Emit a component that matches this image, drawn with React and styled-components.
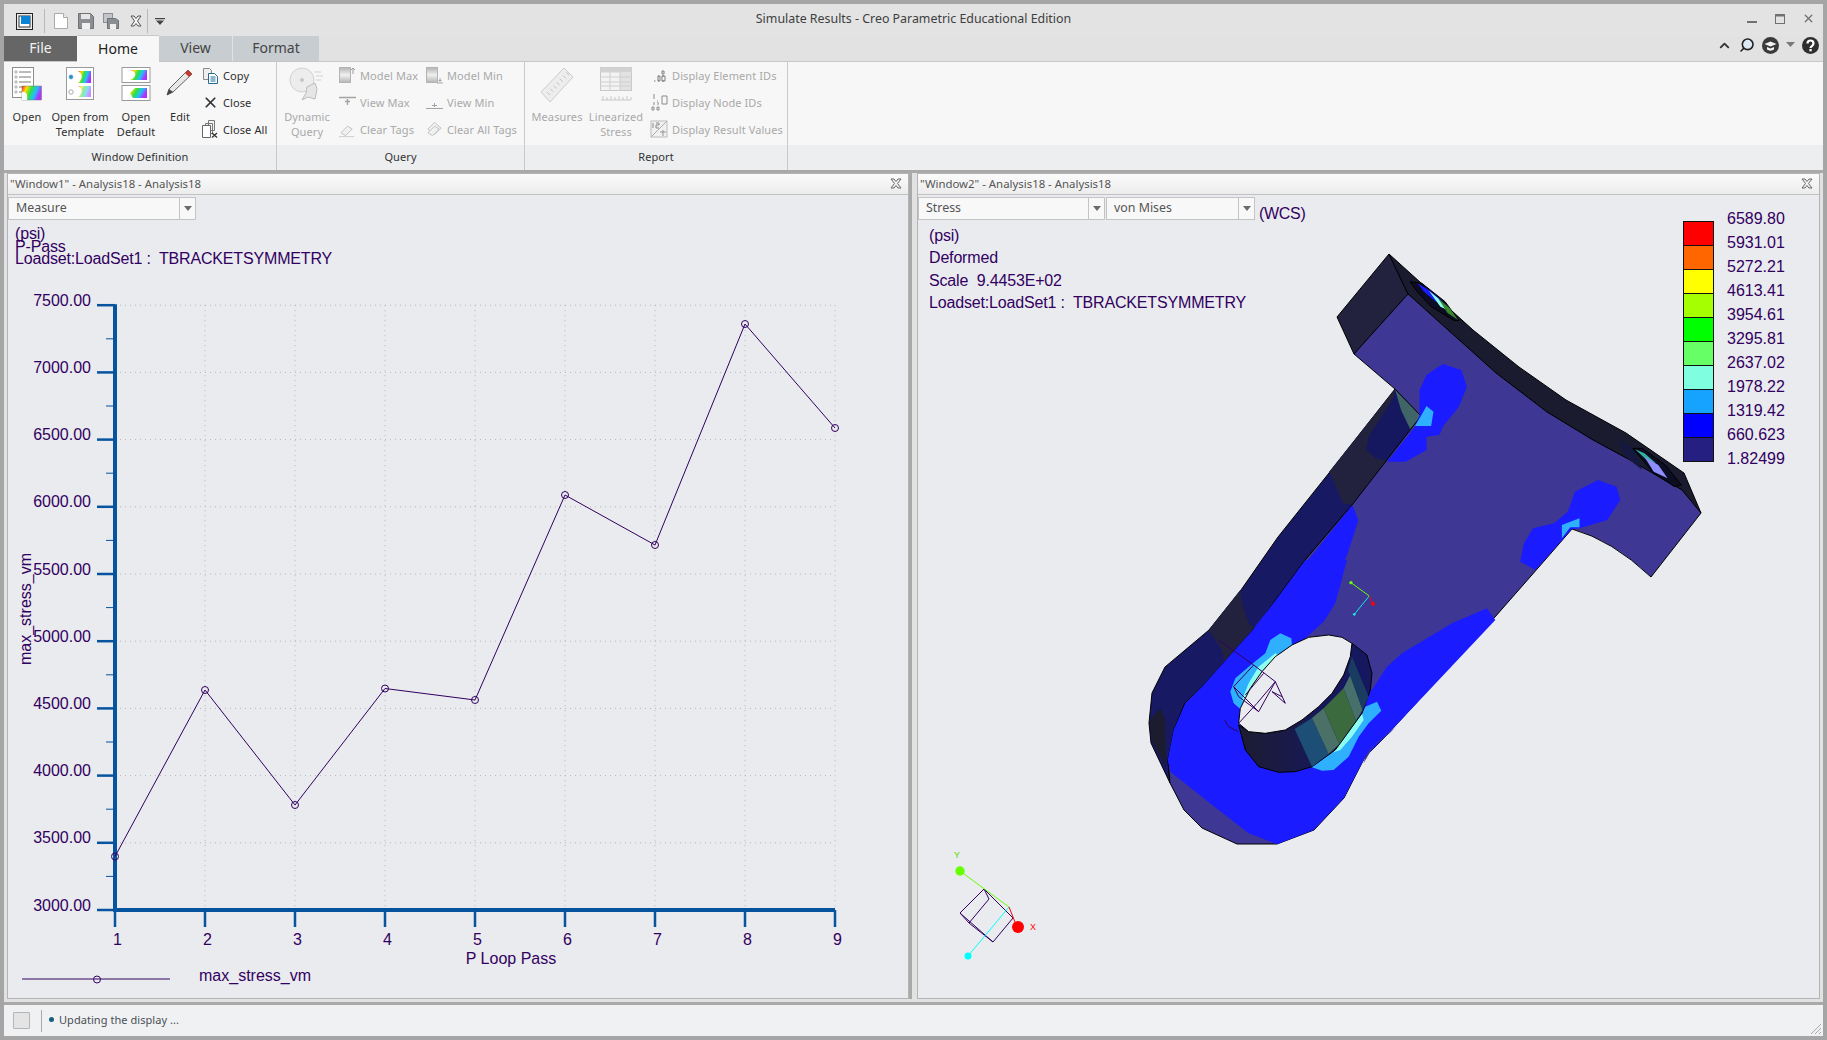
import styled, { createGlobalStyle } from "styled-components";
import { ChevronUp, Search, X } from "lucide-react";

const GlobalStyle = createGlobalStyle`
  html, body { margin: 0; padding: 0; background: #a5a5a5; }
  body { font-family: "Noto Sans", "Open Sans", sans-serif; overflow: hidden; }
`;

const PURPLE = "#32005f";
const AXIS = "#06539f";

/* ---------- ribbon icons ---------- */

const Fringe = ({ id }) => (
  <defs>
    <linearGradient id={id} x1="0" y1="0" x2="1" y2="0.3">
      <stop offset="0" stopColor="#ff2020" />
      <stop offset="0.25" stopColor="#ffe000" />
      <stop offset="0.5" stopColor="#30e040" />
      <stop offset="0.75" stopColor="#20c0ff" />
      <stop offset="1" stopColor="#b030ff" />
    </linearGradient>
  </defs>
);

const OpenIcon = () => (
  <svg width="30" height="34" viewBox="0 0 30 34">
    <Fringe id="f1" />
    <rect x="0.5" y="0.5" width="21" height="30" fill="#fff" stroke="#8d8d8d" />
    {[5, 10, 15, 20, 25].map((y) => (
      <g key={y}>
        <circle cx="4" cy={y} r="1.2" fill="#fff" stroke="#777" strokeWidth="0.6" />
        <line x1="7" y1={y} x2="19" y2={y} stroke="#777" />
      </g>
    ))}
    <rect x="10" y="19" width="19.5" height="14" fill="url(#f1)" stroke="#777" strokeWidth="0.5" />
    <path d="M10 25c4-1 6 3 5 8h-5z" fill="#fff" />
  </svg>
);

const TemplateIcon = () => (
  <svg width="30" height="34" viewBox="0 0 30 34">
    <Fringe id="f2" />
    <rect x="1.5" y="0.5" width="27" height="32" fill="#fff" stroke="#9a9a9a" />
    <rect x="13" y="4" width="13" height="12" fill="url(#f2)" />
    <path d="M13 4c5 3 5 8 0 12z" fill="#fff" />
    <rect x="13" y="19" width="13" height="11" fill="url(#f2)" opacity="0.55" />
    <path d="M13 19c5 3 5 7 0 11z" fill="#fff" />
    <circle cx="6" cy="10" r="2.4" fill="#2b8fc4" stroke="#fff" strokeWidth="0.5" />
    <circle cx="6" cy="25" r="2.2" fill="#fff" stroke="#aaa" />
  </svg>
);

const DefaultIcon = () => (
  <svg width="30" height="34" viewBox="0 0 30 34">
    <Fringe id="f3" />
    <rect x="1" y="0.5" width="28" height="15" fill="#fff" stroke="#9a9a9a" />
    <rect x="9" y="3" width="17" height="10" fill="url(#f3)" />
    <path d="M9 3c6 1 8 7 0 10z" fill="#fff" />
    <rect x="1" y="18.5" width="28" height="15" fill="#fff" stroke="#9a9a9a" />
    <rect x="6" y="21" width="20" height="10" fill="url(#f3)" />
    <path d="M6 21h8l-5 5 3 5H6z" fill="#fff" />
  </svg>
);

const PencilIcon = () => (
  <svg width="30" height="30" viewBox="0 0 30 30">
    <path d="M23 3l4 4L8 25l-6 3 2-6z" fill="#e8e8e8" stroke="#555" strokeWidth="0.9" />
    <path d="M23 3l4 4-3 3-4-4z" fill="#c5392c" />
    <path d="M2 28l2-6 4 3z" fill="#444" />
  </svg>
);

const CopyIcon = () => (
  <svg width="17" height="17" viewBox="0 0 17 17">
    <path d="M1.5 1.5h6l2 2v9h-8z" fill="#eee" stroke="#8a8a8a" />
    <path d="M6.5 6.5h6l3 3v7h-9z" fill="#fff" stroke="#226a95" />
    <path d="M8.5 10h5M8.5 12h5M8.5 14h5" stroke="#226a95" />
  </svg>
);

const CloseAllIcon = () => (
  <svg width="17" height="18" viewBox="0 0 17 18">
    <path d="M6.5.5h6v10h-6zM3.5 3.5h7v10h-7z" fill="#f3f3f3" stroke="#777" />
    <path d="M.5 5.5h8v12h-8z" fill="#fff" stroke="#666" />
    <path d="M10 13l5 4.5M15 13l-5 4.5" stroke="#333" strokeWidth="1.3" />
  </svg>
);

const DiscIcon = () => (
  <svg width="36" height="36" viewBox="0 0 36 36" opacity="0.62">
    <circle cx="13" cy="13" r="12" fill="#e8e8e8" stroke="#bbb" />
    <circle cx="13" cy="13" r="2" fill="#aaa" />
    <path d="M25 5h7M27 9h7M27 13h5" stroke="#bbb" />
    <path d="M18 20l8-4 2 6-2 10-7-2-6 3 4-7z" fill="#ddd" stroke="#999" />
  </svg>
);

const MaxIcon = ({ min }) => (
  <svg width="17" height="17" viewBox="0 0 17 17" opacity="0.7">
    <defs>
      <linearGradient id={min ? "mn" : "mx"} x1="0" y1="0" x2="0" y2="1">
        <stop offset="0" stopColor="#999" />
        <stop offset="0.5" stopColor="#eee" />
        <stop offset="1" stopColor="#999" />
      </linearGradient>
    </defs>
    <rect x="0.5" y="0.5" width="11" height="15" fill={`url(#${min ? "mn" : "mx"})`} stroke="#999" />
    {min ? (
      <path d="M11 16h6M14 11v4M12.5 13.5h3" stroke="#888" />
    ) : (
      <path d="M14 1v6M12 3l2-2 2 2" stroke="#777" fill="none" />
    )}
  </svg>
);

const LineIcon = ({ top }) => (
  <svg width="17" height="17" viewBox="0 0 17 17" opacity="0.75">
    <path d={top ? "M0 3.5h17M8.5 5v6M6 7.5h5" : "M0 14.5h17M8.5 9v4M6 11.5h5"} stroke="#888" strokeWidth={top ? 1.4 : 1} />
  </svg>
);

const EraserIcon = ({ double }) => (
  <svg width="18" height="17" viewBox="0 0 18 17" opacity="0.7">
    {double && <path d="M2 8l7-7 7 6-7 7z" fill="#eee" stroke="#aaa" />}
    <path d="M2 12l7-7 5 3-7 7z" fill="#eee" stroke="#aaa" />
    {!double && <path d="M0 16h16" stroke="#bbb" />}
  </svg>
);

const RulerIcon = () => (
  <svg width="34" height="36" viewBox="0 0 34 36" opacity="0.55">
    <path d="M1 25L24 1l9 9-23 25z" fill="#e6e6e6" stroke="#aaa" />
    {[0, 1, 2, 3, 4, 5, 6].map((i) => (
      <path key={i} d={`M${7 + i * 3.2} ${25 - i * 3.3}l3 3`} stroke="#999" />
    ))}
  </svg>
);

const TableIcon = () => (
  <svg width="32" height="36" viewBox="0 0 32 36" opacity="0.6">
    <rect x="0.5" y="0.5" width="31" height="23" fill="#f2f2f2" stroke="#aaa" />
    <rect x="0.5" y="0.5" width="31" height="5" fill="#bbb" />
    <rect x="20" y="6" width="11" height="17" fill="#d5d5d5" />
    <path d="M0 10h32M0 15h32M0 19h32M10 0v24M20 0v24" stroke="#b5b5b5" />
    <path d="M1 33h30M3 33v-4M7 33v-3M11 33v-4M15 33v-3M19 33v-4M23 33v-3M27 33v-4M31 33v-3" stroke="#aaa" />
  </svg>
);

const IdIcon = ({ kind }) => (
  <svg width="18" height="18" viewBox="0 0 18 18" opacity="0.75">
    {kind === "element" && (
      <path d="M4 15h1.5M8 15h1M8 10h1M12 10h2M12 15h2M12 5h2v3h-2zM8 10h2v5H8zM12 10h3v5h-3z" stroke="#555" fill="none" />
    )}
    {kind === "node" && (
      <path d="M4 1v5M7 8h1M4 9v3M8 9v3M2 14h2v3H2zM7 14h2v3H7zM12 3h5v8h-5z" stroke="#666" fill="none" />
    )}
    {kind === "result" && (
      <>
        <rect x="1" y="1" width="16" height="16" fill="#eee" stroke="#aaa" />
        <path d="M1 17L17 1" stroke="#999" />
        <path d="M3 3v5M6 3H9v2H6v3h3" stroke="#666" fill="none" />
        <path d="M10 12h6M13 10v6" stroke="#777" />
      </>
    )}
  </svg>
);

/* ---------- title bar ---------- */

const Window = styled.div`
  width: 1827px;
  height: 1040px;
  box-sizing: border-box;
  border: 4px solid #a5a5a5;
  display: flex;
  flex-direction: column;
  background: #e2e2e2;
`;

const TitleBar = styled.div`
  height: 32px;
  flex: none;
  display: flex;
  align-items: center;
  position: relative;
  background: #e3e3e3;
`;

const Quick = styled.div`
  display: flex;
  align-items: center;
  height: 24px;
  margin-top: 2px;
  padding-left: 12px;
`;

const QuickSep = styled.span`
  width: 1px;
  height: 24px;
  background: #b9b9b9;
  margin: ${(p) => p.$m};
`;

const Title = styled.div`
  position: absolute;
  left: 0;
  right: 0;
  top: 7px;
  text-align: center;
  font-size: 12.4px;
  line-height: 16px;
  color: #3e3e3e;
`;

const WinControls = styled.div`
  margin-left: auto;
  display: flex;
  gap: 16px;
  padding: 0 8px 3px 0;
  align-items: center;
`;

const TabRow = styled.div`
  height: 26px;
  flex: none;
  display: flex;
  align-items: stretch;
  border-bottom: 1px solid #c7c7c7;
  box-sizing: border-box;
  position: relative;
`;

const Tab = styled.div`
  width: ${(p) => p.$w}px;
  margin-left: ${(p) => p.$ml || 0}px;
  padding-bottom: 2px;
  box-sizing: border-box;
  display: flex;
  align-items: center;
  justify-content: center;
  font-size: 14px;
  background: ${(p) => p.$bg};
  color: ${(p) => p.$fg};
  ${(p) =>
    p.$active &&
    "margin-top: -1px; height: 27px; border-top: 1px solid #c7c7c7; z-index: 1;"}
`;

const HelpIcons = styled.div`
  position: absolute;
  right: 4px;
  top: -1px;
  height: 20px;
  display: flex;
  align-items: center;
  gap: 7px;
`;

/* ---------- ribbon ---------- */

const Ribbon = styled.div`
  height: 108px;
  flex: none;
  display: flex;
  background: #f7f7f7;
  font-size: 11px;
  letter-spacing: 0.1px;
`;

const Group = styled.div`
  width: ${(p) => p.$w}px;
  flex: ${(p) => (p.$grow ? 1 : "none")};
  display: flex;
  flex-direction: column;
  box-sizing: border-box;
  border-right: ${(p) => (p.$grow ? "none" : "1px solid #c9c9c9")};
`;

const GroupBody = styled.div`
  flex: 1;
  display: flex;
  align-items: flex-start;
  padding-top: 5px;
`;

const GroupLabel = styled.div`
  height: 25px;
  flex: none;
  background: #eceeef;
  text-align: center;
  line-height: 23px;
  color: #333;
`;

const BigButton = styled.div`
  width: ${(p) => p.$w}px;
  flex: none;
  display: flex;
  flex-direction: column;
  align-items: center;
  line-height: 15px;
  text-align: center;
  white-space: nowrap;
  color: ${(p) => (p.$off ? "#a9a9a9" : "#2f2f2f")};
`;

const BigIcon = styled.div`
  height: 34px;
  margin-bottom: 8px;
  display: flex;
  align-items: flex-start;
`;

const SmallColumn = styled.div`
  width: ${(p) => p.$w}px;
  margin-left: ${(p) => p.$ml || 0}px;
  margin-top: -1px;
  flex: none;
  display: flex;
  flex-direction: column;
  gap: 9px;
`;

const SmallButton = styled.div`
  height: 18px;
  display: flex;
  align-items: center;
  gap: 4px;
  white-space: nowrap;
  color: ${(p) => (p.$off ? "#a9a9a9" : "#2f2f2f")};
`;

const SmallIcon = styled.span`
  width: ${(p) => p.$w || 17}px;
  flex: none;
  display: flex;
  justify-content: center;
`;

/* ---------- workspace ---------- */

const Workspace = styled.div`
  flex: 1;
  min-height: 0;
  display: flex;
  padding: 0 4px 3px 3px;
  border-top: 3px solid #a9a9a9;
  border-bottom: 3px solid #a9a9a9;
  background: #e2e2e2;
  box-sizing: border-box;
`;

const Panel = styled.div`
  width: ${(p) => p.$w}px;
  margin-left: ${(p) => p.$ml || 0}px;
  flex: none;
  box-sizing: border-box;
  display: flex;
  flex-direction: column;
  border: 1px solid #b4b4b4;
  background: #e9ebef;
`;

const Divider = styled.div`
  width: 3px;
  flex: none;
  margin: 0 3px 0 0;
  background: #a9a9a9;
`;

const PanelHeader = styled.div`
  height: 21px;
  flex: none;
  box-sizing: border-box;
  display: flex;
  align-items: center;
  justify-content: space-between;
  padding: 0 6px 2px 2px;
  border-bottom: 1px solid #c2c2c2;
  background: linear-gradient(#fbfbfb, #ececec);
  font-size: 11.4px;
  color: #555;
  margin-bottom: 1px;
`;

const Canvas = styled.div`
  flex: 1;
  position: relative;
  overflow: hidden;
`;

const Toolbar = styled.div`
  position: relative;
  display: flex;
  gap: 1px;
  padding-top: 1px;
  z-index: 1;
`;

const Combo = styled.div`
  width: ${(p) => p.$w}px;
  height: 23px;
  box-sizing: border-box;
  display: flex;
  border: 1px solid #c4c4c4;
  background: #f8f8f8;
  font-size: 12.4px;
  line-height: 19px;
  color: #555;
`;

const ComboText = styled.span`
  flex: 1;
  padding-left: ${(p) => p.$pl}px;
`;

const ComboArrow = styled.span`
  width: 15px;
  border-left: 1px solid #c4c4c4;
  display: flex;
  align-items: center;
  justify-content: center;
  &::after {
    content: "";
    border: 4px solid transparent;
    border-top: 5px solid #6b6b6b;
    border-bottom: 0;
  }
`;

const Wcs = styled.span`
  font: 16px/20px "Liberation Sans", Arial, sans-serif;
  letter-spacing: -0.3px;
  color: ${PURPLE};
  margin: 7px 0 0 3px;
`;

const Notes = styled.div`
  position: relative;
  padding: ${(p) => p.$pad};
  font-family: "Liberation Sans", Arial, sans-serif;
  font-size: 16px;
  letter-spacing: -0.17px;
  line-height: ${(p) => p.$lh}px;
  color: ${PURPLE};
  white-space: pre;
`;

const Plot = styled.svg`
  position: absolute;
  left: 0;
  top: 0;
  font-family: "Liberation Sans", Arial, sans-serif;
  font-size: 16px;
  & polygon,
  & polyline,
  & path,
  & line {
    vector-effect: non-scaling-stroke;
  }
`;

const Legend = styled.div`
  position: absolute;
  left: 765px;
  top: 11px;
  display: flex;
  gap: 13px;
  font: 16px/24px "Liberation Sans", Arial, sans-serif;
  color: ${PURPLE};
`;

const Swatches = styled.div`
  width: 31px;
  margin-top: 14px;
  align-self: flex-start;
  border: 1px solid #111;
  box-sizing: border-box;
`;

const Swatch = styled.div`
  height: 24px;
  box-sizing: border-box;
  border-bottom: 1px solid #111;
  background: ${(p) => p.$c};
  &:last-child {
    height: 23px;
    border-bottom: 0;
  }
`;

const StatusBar = styled.div`
  height: 31px;
  flex: none;
  display: flex;
  align-items: center;
  background: #f0f1f3;
  font-size: 11px;
  letter-spacing: 0.05px;
  color: #4a4f55;
  position: relative;
`;

const StatusBox = styled.div`
  width: 15px;
  height: 15px;
  margin-left: 9px;
  background: #e4e4e4;
  border: 1px solid #b5b5b5;
  border-radius: 1px;
`;

const StatusSep = styled.div`
  width: 1px;
  height: 22px;
  margin: 0 7px 0 11px;
  background: #a9a9a9;
`;

const StatusDot = styled.span`
  width: 5px;
  height: 5px;
  border-radius: 50%;
  margin: 0 5px 3px 0;
  background: #155f7f;
`;

const StatusText = styled.span`
  margin-bottom: 2px;
`;

const Grip = styled.svg`
  position: absolute;
  right: 1px;
  bottom: 1px;
`;

/* ---------- chart data ---------- */

const yLabels = [7500, 7000, 6500, 6000, 5500, 5000, 4500, 4000, 3500, 3000];
const passes = [1, 2, 3, 4, 5, 6, 7, 8, 9];
const points = [
  [115, 856.5],
  [205, 690],
  [295, 805],
  [385, 688.5],
  [475, 700],
  [565, 495],
  [655, 545],
  [745, 324],
  [835, 428],
];
const X0 = 115;
const Y0 = 910;
const DX = 90;
const DY = 67.2;

const legendRows = [
  ["6589.80", "#ff0000"],
  ["5931.01", "#ff6600"],
  ["5272.21", "#ffff00"],
  ["4613.41", "#a6ff00"],
  ["3954.61", "#00ff00"],
  ["3295.81", "#66ff66"],
  ["2637.02", "#7fffdf"],
  ["1978.22", "#15a3ff"],
  ["1319.42", "#0000ff"],
  ["660.623", "#241f80"],
];

const StressChart = () => {
  const top = Y0 - 9 * DY;
  return (
    <Plot width="901" height="802" viewBox="8 196 901 802">
      {yLabels.slice(0, -1).map((v, i) => (
        <line key={v} x1={X0} x2={X0 + 8 * DX} y1={top + i * DY} y2={top + i * DY} stroke="#b4b7bb" strokeDasharray="1 4" />
      ))}
      {passes.slice(1).map((p, i) => (
        <line key={p} x1={X0 + (i + 1) * DX} x2={X0 + (i + 1) * DX} y1={top} y2={Y0} stroke="#b4b7bb" strokeDasharray="1 4" />
      ))}
      {yLabels.map((v, i) => (
        <g key={v}>
          <text x="91" y={top + i * DY + 0.5} textAnchor="end" fill={PURPLE}>
            {v.toFixed(2)}
          </text>
          <line x1="97" x2={X0} y1={top + i * DY} y2={top + i * DY} stroke={AXIS} strokeWidth="2.5" />
          {i < 9 && (
            <line x1="106" x2={X0} y1={top + (i + 0.5) * DY} y2={top + (i + 0.5) * DY} stroke={AXIS} />
          )}
        </g>
      ))}
      {passes.map((p, i) => (
        <g key={p}>
          <line x1={X0 + i * DX} x2={X0 + i * DX} y1={Y0} y2="927" stroke={AXIS} strokeWidth="2.5" />
          <text x={X0 + i * DX + 2.5} y="945" textAnchor="middle" fill={PURPLE}>
            {p}
          </text>
        </g>
      ))}
      <line x1={X0} x2={X0} y1={top - 1} y2={Y0 + 2} stroke={AXIS} strokeWidth="4" />
      <line x1={X0} x2={X0 + 8 * DX} y1={Y0} y2={Y0} stroke={AXIS} strokeWidth="4" />
      <polyline points={points.map((p) => p.join(",")).join(" ")} fill="none" stroke={PURPLE} />
      {points.map(([x, y]) => (
        <circle key={x} cx={x} cy={y} r="3.5" fill="none" stroke={PURPLE} />
      ))}
      <text x="511" y="964" textAnchor="middle" fill={PURPLE}>
        P Loop Pass
      </text>
      <text transform="translate(31 609) rotate(-90)" textAnchor="middle" fill={PURPLE}>
        max_stress_vm
      </text>
      <line x1="22" x2="170" y1="979" y2="979" stroke={PURPLE} />
      <circle cx="97" cy="979.5" r="3.5" fill="none" stroke={PURPLE} />
      <text x="199" y="981" fill={PURPLE}>
        max_stress_vm
      </text>
    </Plot>
  );
};

/* zoomed-coordinate groups keep the traced shapes readable */
const upper = "translate(1100 170) scale(0.4636 0.3333)";
const lower = "translate(1100 560) scale(0.3333)";

const FACE = "#3e3793";
const BLUE = "#1b1bff";
const SKY = "#2fb0ff";
const AQUA = "#8dfff0";
const NAVY = "#171962";
const DARK = "#22223f";

const BracketModel = () => (
  <Plot width="902" height="802" viewBox="916 196 902 802">
    <defs>
      <linearGradient id="wallDark" x1="0" y1="0" x2="1" y2="0">
        <stop offset="0" stopColor="#1c1c30" />
        <stop offset="0.7" stopColor="#16185f" />
      </linearGradient>
    </defs>
    {/* back and top faces */}
    <polygon points="1387,254 1335,317 1352,354 1406,294" fill={DARK} stroke="#000" />
    <path
      d="M1387 254 L1471 330 L1517 367 L1564 400 L1624 433 L1682 473 L1699 513 L1680 490 L1628 460 L1591 440 L1545 412 L1494 373 L1406 294 Z"
      fill="#1b1b30"
      stroke="#000"
    />
    {/* long side */}
    <path
      d="M1393 389 L1327 473 L1276 537 L1239 590 L1207 630 L1163 667 L1150 693 L1147 723 L1149 743 L1168 783 L1166 760 L1172 730 L1183 703 L1200 687 L1257 623 L1303 560 L1350 505 L1419 416 Z"
      fill={NAVY}
      stroke="#000"
    />
    <g transform={upper}>
      <polygon points="632,658 490,905 520,1000 540,1005 650,830 665,780 630,680" fill={DARK} />
      <polygon points="630,680 575,800 570,840 590,865 615,870 665,780 650,730" fill="#16185f" />
      <polygon points="632,658 688,738 665,778 645,720" fill="#3f6567" />
    </g>
    <g transform={lower}>
      <polygon points="415,90 420,130 440,190 465,210 440,260 390,305 365,300 360,270 320,210" fill={DARK} />
      <polygon points="175,445 190,480 192,620 150,545 143,480" fill="#1c1c30" />
    </g>
    {/* main face */}
    <path
      d="M1406 294 L1494 373 L1545 412 L1591 440 L1628 460 L1680 490 L1699 513 L1649 577 Q1610 540 1570 529 L1543 560 L1493 617 L1383 737 L1363 757 L1342 798 L1312 830 L1275 844 L1235 844 L1200 828 L1182 810 L1168 783 L1166 760 L1172 730 L1183 703 L1200 687 L1257 623 L1303 560 L1350 505 L1419 416 L1393 389 L1352 354 Z"
      fill={FACE}
      stroke="#000"
    />
    {/* stress patches */}
    <g transform={upper}>
      <polygon
        points="735,582 775,600 787,650 770,710 735,770 728,795 700,800 700,840 655,875 615,875 675,770 685,735 685,660 700,615"
        fill={BLUE}
      />
      <polygon points="700,708 715,725 710,768 675,768 688,738" fill={SKY} />
      <polygon
        points="1070,930 1110,950 1118,990 1090,1050 1030,1075 1013,1078 935,1200 902,1175 910,1120 930,1075 975,1060 1005,1025 1020,965"
        fill={BLUE}
      />
      <polygon points="1030,1045 1030,1072 1010,1072 992,1105 992,1065" fill={SKY} />
      <polygon points="540,1005 553,1050 530,1150 500,1250 480,1340 440,1400 300,1500 330,1370" fill={BLUE} />
      {/* screw holes on the top face */}
      <polygon points="665,335 690,340 740,395 770,452 760,452 710,410 680,365" fill="#0c0c22" stroke="#000" />
      <polygon points="680,340 705,360 735,395 720,395 695,365" fill={BLUE} />
      <polygon points="705,362 725,385 745,420 730,410" fill={AQUA} />
      <polygon points="725,385 750,415 768,450 745,428" fill="#3a8a30" />
      <polygon points="1110,805 1145,835 1165,900 1130,860" fill="#15183f" />
      <polygon points="1145,835 1165,835 1215,885 1250,945 1235,950 1190,910" fill="#0c0c22" stroke="#000" />
      <polygon points="1150,838 1170,850 1195,880 1175,870" fill="#36b0a0" />
      <polygon points="1170,860 1200,885 1220,925 1190,905" fill="#8e8eff" />
    </g>
    <g transform={lower}>
      <polygon
        points="610,0 735,0 700,130 665,185 610,235 810,390 855,320 900,280 1050,190 1155,145 1180,180 850,530 790,590 725,715 635,810 525,853 440,820 350,750 205,635 197,600 215,510 250,430 300,380 470,190"
        fill={BLUE}
      />
      <polygon
        points="535,220 568,235 570,255 520,290 470,340 440,400 425,455 395,430 385,395 400,355 440,320 490,280 505,240"
        fill={SKY}
      />
      <polygon points="520,280 530,285 480,335 445,390 430,430 420,420 440,370 470,320" fill={AQUA} />
      <polygon points="790,440 825,425 838,452 800,490 770,530 740,590 695,630 660,632 630,622 700,570 780,460" fill={SKY} />
      <polygon points="780,460 785,480 750,530 715,570 685,580 720,545" fill={AQUA} />
      <polygon points="880,505 850,530 810,560 790,590 785,610 820,550" fill={FACE} />
      {/* hole through the lug */}
      <polygon
        points="410,495 430,570 470,620 530,637 580,635 630,620 700,570 780,460 805,390 810,340 795,285 750,250 725,345 690,400 650,440 600,480 550,510 490,520 440,515"
        fill="url(#wallDark)"
        stroke="#000"
      />
      <polygon points="578,507 630,620 680,582 630,474" fill="#1d4f76" />
      <polygon points="630,474 680,582 712,552 665,445" fill="#4a7068" />
      <polygon points="665,445 712,552 762,482 725,385" fill="#3b6a3e" />
      <polygon points="725,385 762,482 782,450 745,345" fill="#47706b" />
      <polygon points="738,330 782,450 800,410 750,290" fill="#1a3c60" />
      <polygon
        points="410,490 415,445 445,385 480,335 520,290 570,255 620,232 680,225 720,232 750,250 745,290 725,345 690,400 650,440 600,480 550,510 490,520 440,515"
        fill="#e9ebef"
        stroke="#000"
      />
      {/* wireframe triad seen through the part */}
      <path
        d="M350 240L455 315L395 380L470 455L520 365L455 315M395 380L410 410L470 455M410 490L465 430L520 365M485 340L430 405M520 365L550 430L510 395L540 410M368 480L380 500L408 515"
        fill="none"
        stroke={PURPLE}
      />
      <line x1="747" y1="68" x2="802" y2="108" stroke="#66ff00" />
      <line x1="802" y1="108" x2="757" y2="163" stroke="#19e6e6" />
      <line x1="802" y1="108" x2="813" y2="131" stroke="#ff0000" />
      <circle cx="747" cy="68" r="5" fill="#66ff00" />
      <circle cx="757" cy="163" r="4" fill="#19e6e6" />
      <circle cx="813" cy="131" r="6" fill="#ff0000" />
    </g>
    {/* view orientation triad */}
    <g fill="none" stroke={PURPLE}>
      <polygon points="982,889 958,913 991,942 1011,918" />
      <path d="M982 889L987 899L967 923L958 913M967 923L991 942" />
    </g>
    <line x1="958" y1="871" x2="1007" y2="907" stroke="#66ff00" />
    <line x1="1007" y1="907" x2="966" y2="956" stroke="#00ffff" />
    <line x1="1007" y1="907" x2="1013" y2="922" stroke="#ff0000" />
    <circle cx="958" cy="871" r="4.7" fill="#66ff00" />
    <circle cx="966" cy="956" r="3.5" fill="#00ffff" />
    <circle cx="1016" cy="927" r="6" fill="#ff0000" />
    <text x="955" y="858" fontSize="9" textAnchor="middle" fill="#55dd00">
      Y
    </text>
    <text x="1031" y="930" fontSize="9" textAnchor="middle" fill="#ff0000">
      X
    </text>
  </Plot>
);

function CloseCross() {
  return (
    <svg width="12" height="11" viewBox="0 0 12 11">
      <path d="M1 1h3l2 2.500L8 1h3L7.500 5.500 11 10H8L6 7.500 4 10H1l3.500-4.500z" fill="#f4f4f4" stroke="#666" />
    </svg>
  );
}

export default function App() {
  return (
    <Window>
      <GlobalStyle />
      <TitleBar>
        <Quick>
          <svg width="17" height="17" viewBox="0 0 17 17">
            <rect x="0.5" y="0.5" width="16" height="16" fill="#eee" stroke="#222" />
            <rect x="3" y="3" width="11" height="11" fill="#fff" stroke="#333" />
            <path d="M5 3h9v8H5z" fill="#0a84d6" />
          </svg>
          <QuickSep $m="0 9px 0 11px" />
          <svg width="14" height="16" viewBox="0 0 14 16">
            <path d="M.5.5h9l4 4v11H.5z" fill="#fff" stroke="#aaa" />
            <path d="M9.5.5v4h4" fill="#eee" stroke="#aaa" />
          </svg>
          <svg width="16" height="16" viewBox="0 0 16 16" style={{ marginLeft: 10 }}>
            <path d="M.5.5h12l3 3v12H.5z" fill="#8b8f93" stroke="#6e7276" />
            <rect x="3" y="1" width="9" height="5" fill="#e6e6e6" />
            <rect x="4" y="10" width="8" height="6" fill="#f0f0f0" />
          </svg>
          <svg width="16" height="16" viewBox="0 0 16 16" style={{ marginLeft: 9 }}>
            <rect x="0.5" y="0.5" width="9" height="9" fill="#c3c5c8" stroke="#8b8f93" />
            <path d="M4.500 5.500h8l3 2v8h-11z" fill="#8b8f93" stroke="#6e7276" />
            <rect x="7" y="11" width="6" height="5" fill="#efefef" />
          </svg>
          <svg width="12" height="12" viewBox="0 0 12 12" style={{ marginLeft: 11 }}>
            <path d="M1 1h3l2 2.500L8 1h3L7.500 6 11 11H8L6 8.500 4 11H1l3.500-5z" fill="#f4f4f4" stroke="#555" />
          </svg>
          <QuickSep $m="0 7px 0 5px" />
          <svg width="10" height="7" viewBox="0 0 10 7">
            <path d="M0 0h10v1.200H0zM1 2.500h8L5 7z" fill="#444" />
          </svg>
        </Quick>
        <Title>Simulate Results - Creo Parametric Educational Edition</Title>
        <WinControls>
          <svg width="12" height="12" viewBox="0 0 12 12">
            <path d="M1 9h10" stroke="#707070" strokeWidth="2" />
          </svg>
          <svg width="12" height="12" viewBox="0 0 12 12">
            <rect x="1.500" y="1.500" width="9" height="9" fill="none" stroke="#707070" />
            <path d="M1.500 2.500h9" stroke="#707070" strokeWidth="2" />
          </svg>
          <X size={13} color="#707070" strokeWidth={2.4} />
        </WinControls>
      </TitleBar>
      <TabRow>
        <Tab $w={73} $bg="#666" $fg="#f2f2f2">File</Tab>
        <Tab $w={82} $bg="#f7f7f7" $fg="#222" $active>Home</Tab>
        <Tab $w={73} $bg="#c8cdd1" $fg="#444">View</Tab>
        <Tab $w={86} $ml={1} $bg="#c8cdd1" $fg="#444">Format</Tab>
        <HelpIcons>
          <ChevronUp size={15} color="#333" strokeWidth={3} />
          <Search size={16} color="#222" fill="#dbe9f5" strokeWidth={2.4} style={{ transform: "scaleX(-1)" }} />
          <svg width="17" height="17" viewBox="0 0 17 17">
            <circle cx="8.500" cy="8.500" r="8.500" fill="#3a3a3a" />
            <path d="M2.500 7l6-2.500 6 2.500-6 2.500z" fill="#f3f3f3" />
            <path d="M5 10v2.500c2 1.500 5 1.500 7 0V10l-3.500 1.500z" fill="#f3f3f3" />
          </svg>
          <svg width="9" height="6" viewBox="0 0 9 6">
            <path d="M0 0h9L4.500 5z" fill="#777" />
          </svg>
          <svg width="17" height="17" viewBox="0 0 17 17">
            <circle cx="8.500" cy="8.500" r="8.500" fill="#2e2e2e" />
            <path d="M5.500 6.500c0-4 6-4 6 0 0 2.500-3 2.500-3 4.500" fill="none" stroke="#fff" strokeWidth="2.200" />
            <rect x="7.400" y="12" width="2.300" height="2.300" fill="#fff" />
          </svg>
        </HelpIcons>
      </TabRow>
      <Ribbon>
        <Group $w={273}>
          <GroupBody>
            <BigButton $w={46}>
              <BigIcon><OpenIcon /></BigIcon>
              Open
            </BigButton>
            <BigButton $w={60}>
              <BigIcon><TemplateIcon /></BigIcon>
              Open from
              <br />
              Template
            </BigButton>
            <BigButton $w={52}>
              <BigIcon><DefaultIcon /></BigIcon>
              Open
              <br />
              Default
            </BigButton>
            <BigButton $w={36}>
              <BigIcon><PencilIcon /></BigIcon>
              Edit
            </BigButton>
            <SmallColumn $w={72} $ml={4}>
              <SmallButton>
                <SmallIcon><CopyIcon /></SmallIcon>Copy
              </SmallButton>
              <SmallButton>
                <SmallIcon><X size={17} color="#333" strokeWidth={2.4} /></SmallIcon>Close
              </SmallButton>
              <SmallButton>
                <SmallIcon><CloseAllIcon /></SmallIcon>Close All
              </SmallButton>
            </SmallColumn>
          </GroupBody>
          <GroupLabel>Window Definition</GroupLabel>
        </Group>
        <Group $w={248}>
          <GroupBody>
            <BigButton $w={60} $off>
              <BigIcon><DiscIcon /></BigIcon>
              Dynamic
              <br />
              Query
            </BigButton>
            <SmallColumn $w={87} $ml={2}>
              <SmallButton $off>
                <SmallIcon><MaxIcon /></SmallIcon>Model Max
              </SmallButton>
              <SmallButton $off>
                <SmallIcon><LineIcon top /></SmallIcon>View Max
              </SmallButton>
              <SmallButton $off>
                <SmallIcon><EraserIcon /></SmallIcon>Clear Tags
              </SmallButton>
            </SmallColumn>
            <SmallColumn $w={95}>
              <SmallButton $off>
                <SmallIcon><MaxIcon min /></SmallIcon>Model Min
              </SmallButton>
              <SmallButton $off>
                <SmallIcon><LineIcon /></SmallIcon>View Min
              </SmallButton>
              <SmallButton $off>
                <SmallIcon><EraserIcon double /></SmallIcon>Clear All Tags
              </SmallButton>
            </SmallColumn>
          </GroupBody>
          <GroupLabel>Query</GroupLabel>
        </Group>
        <Group $w={263}>
          <GroupBody>
            <BigButton $w={64} $off>
              <BigIcon><RulerIcon /></BigIcon>
              Measures
            </BigButton>
            <BigButton $w={54} $off>
              <BigIcon><TableIcon /></BigIcon>
              Linearized
              <br />
              Stress
            </BigButton>
            <SmallColumn $w={130} $ml={7}>
              <SmallButton $off>
                <SmallIcon $w={18}><IdIcon kind="element" /></SmallIcon>Display Element IDs
              </SmallButton>
              <SmallButton $off>
                <SmallIcon $w={18}><IdIcon kind="node" /></SmallIcon>Display Node IDs
              </SmallButton>
              <SmallButton $off>
                <SmallIcon $w={18}><IdIcon kind="result" /></SmallIcon>Display Result Values
              </SmallButton>
            </SmallColumn>
          </GroupBody>
          <GroupLabel>Report</GroupLabel>
        </Group>
        <Group $grow>
          <GroupBody />
          <GroupLabel />
        </Group>
      </Ribbon>
      <Workspace>
        <Panel $w={902}>
          <PanelHeader>
            <span>"Window1" - Analysis18 - Analysis18</span>
            <CloseCross />
          </PanelHeader>
          <Canvas>
            <StressChart />
            <Toolbar>
              <Combo $w={188}>
                <ComboText $pl={7}>Measure</ComboText>
                <ComboArrow />
              </Combo>
            </Toolbar>
            <Notes $pad="8px 0 0 7px" $lh={12.5}>
              {"(psi)\nP-Pass\nLoadset:LoadSet1 :  TBRACKETSYMMETRY"}
            </Notes>
          </Canvas>
        </Panel>
        <Divider />
        <Panel $w={903} $ml={2}>
          <PanelHeader>
            <span>"Window2" - Analysis18 - Analysis18</span>
            <CloseCross />
          </PanelHeader>
          <Canvas>
            <BracketModel />
            <Toolbar>
              <Combo $w={187}>
                <ComboText $pl={7}>Stress</ComboText>
                <ComboArrow />
              </Combo>
              <Combo $w={149}>
                <ComboText $pl={7}>von Mises</ComboText>
                <ComboArrow />
              </Combo>
              <Wcs>(WCS)</Wcs>
            </Toolbar>
            <Notes $pad="1px 0 0 11px" $lh={22.3}>
              {"(psi)\nDeformed\nScale  9.4453E+02\nLoadset:LoadSet1 :  TBRACKETSYMMETRY"}
            </Notes>
            <Legend>
              <Swatches>
                {legendRows.map(([v, c]) => (
                  <Swatch key={v} $c={c} />
                ))}
              </Swatches>
              <div>
                {legendRows.map(([v]) => (
                  <div key={v}>{v}</div>
                ))}
                <div>1.82499</div>
              </div>
            </Legend>
          </Canvas>
        </Panel>
      </Workspace>
      <StatusBar>
        <StatusBox />
        <StatusSep />
        <StatusDot />
        <StatusText>Updating the display ...</StatusText>
        <Grip width="14" height="14" viewBox="0 0 14 14">
          <path d="M13 3L3 13M13 7L7 13M13 11L11 13" stroke="#a9a9a9" />
        </Grip>
      </StatusBar>
    </Window>
  );
}
